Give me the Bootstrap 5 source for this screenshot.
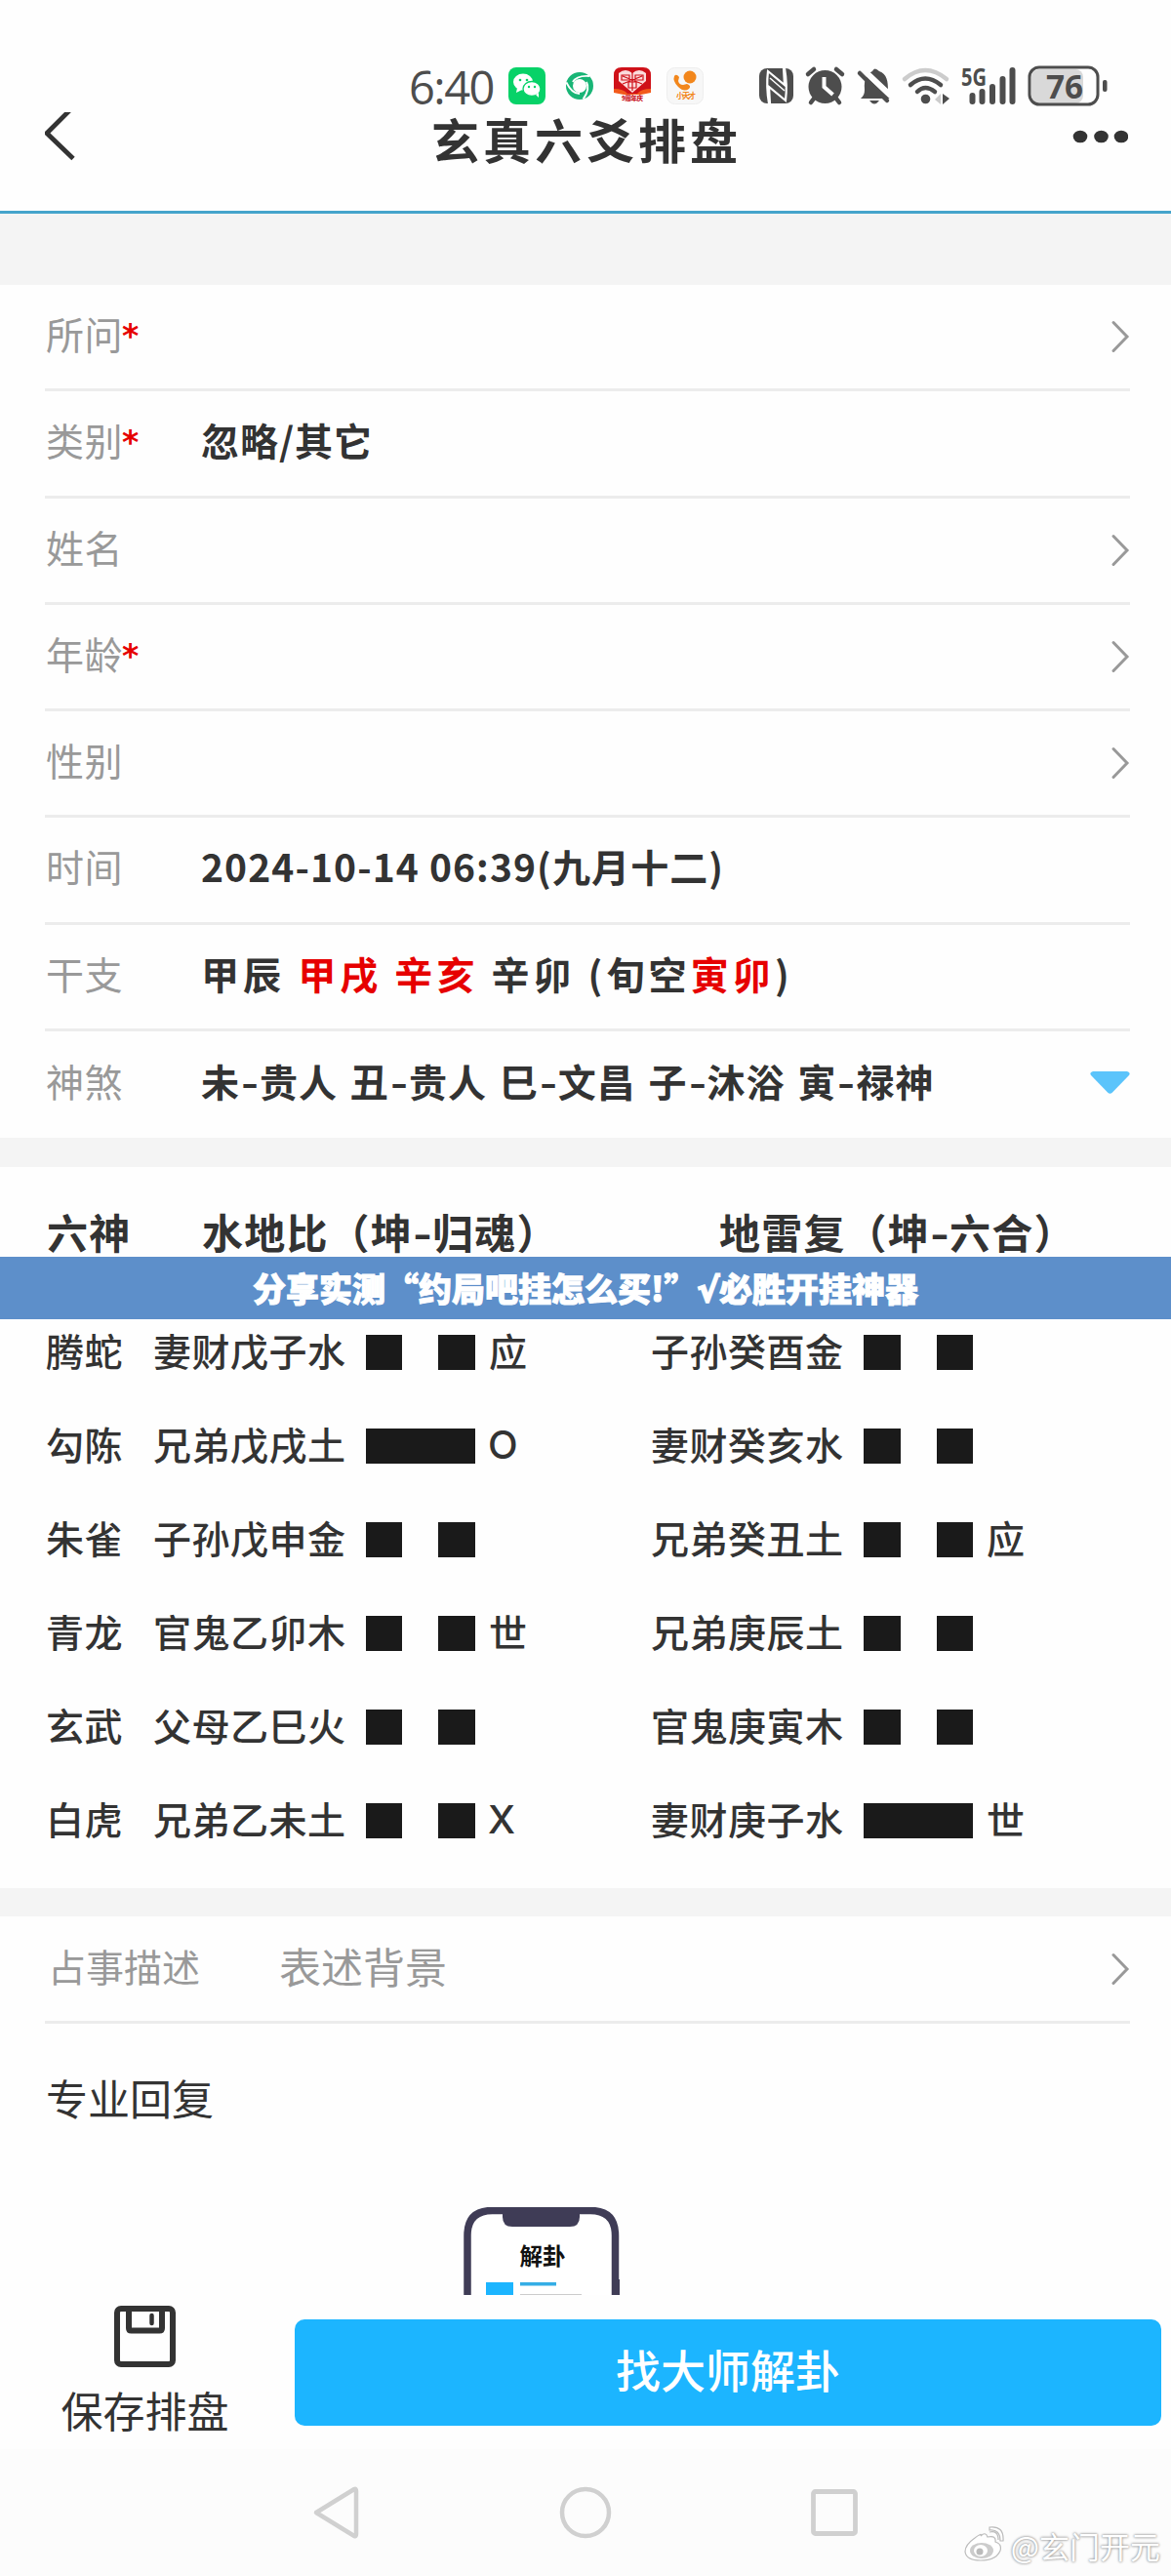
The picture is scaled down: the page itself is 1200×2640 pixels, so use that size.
<!DOCTYPE html>
<html lang="zh-CN">
<head>
<meta charset="utf-8">
<meta name="viewport" content="width=device-width, initial-scale=1">
<title>玄真六爻排盘</title>
<link href="https://cdn.jsdelivr.net/npm/bootstrap@5.3.0/dist/css/bootstrap.min.css" rel="stylesheet">
<style>
body{font-family:"Noto Sans CJK SC",sans-serif;color:#333;background:#fefefe;width:1200px;height:2640px;overflow:hidden;font-size:39px;line-height:1;position:relative}
svg{display:block;flex:none}
.top-area{height:219px;border-bottom:3px solid #45a4cb}
.status-wrap{height:118px}
.status-line{height:58px;margin-top:60px;padding-left:419px}
.clock-text{font-family:"Open Sans","Noto Sans",sans-serif;font-weight:500;font-size:47px;color:#4d4d4d;width:102px;letter-spacing:-1.5px;line-height:50px}
.title-line{height:60px;margin-top:-3px;padding:0 44px 0 46px}
.title-line h1{font-size:49px;letter-spacing:4px;font-weight:700;line-height:50px;margin:0 0 6px}
.gap-strip{background:#f4f4f4}
.strip-top{height:73px}
.strip-mid{height:30px}
.strip-low{height:29px}
.field-row{height:109.25px;margin:0 42px 0 46px;border-bottom:3px solid #ececec}
.field-row:last-child{border-bottom:0}
.field-label{width:161px;padding:0 0 7px 1px;color:#999;letter-spacing:.5px;white-space:nowrap}
.req-star{color:#e60000;font-weight:700;font-family:"DejaVu Sans",sans-serif;font-size:33px;line-height:1;vertical-align:2px;margin-left:-1px}
.field-value{font-weight:700;letter-spacing:1px;white-space:pre;padding-bottom:7px;margin-left:-1px}
.date-value{letter-spacing:1.1px}
.omen-value{word-spacing:3px}
.wide-gap{letter-spacing:4.1px}
.dash{display:inline-block;width:20px;text-align:center;letter-spacing:0;transform:scaleX(1.25)}
.hot{color:#e60000}
.chart-head{height:92px;padding-top:44px;font-size:42px;font-weight:700;letter-spacing:1.2px}
.chart-head span{line-height:44px;white-space:nowrap}
.head-god{width:207px;padding-left:48px}
.head-main{width:530px}
.ad-banner{height:64px;background:#5d8fca;color:#fff;font-weight:900;font-size:34px;line-height:64px;-webkit-text-stroke:1px #fff;white-space:nowrap}
.root-mark{font-family:"DejaVu Sans",sans-serif;font-weight:700;-webkit-text-stroke:2px #fff}
.yao-list{height:583px}
.yao-list>div{margin-top:-14px}
.yao-row{height:96px;padding-left:47px;font-weight:500;letter-spacing:.5px;white-space:nowrap}
.yao-god{width:110px;padding-bottom:6px}
.yao-name{width:218px;padding-bottom:6px}
.yao-side{width:510px}
.yao-bar{width:112px;height:36px;background:linear-gradient(90deg,#1a1a1a 37.5px,transparent 37.5px,transparent 74.5px,#1a1a1a 74.5px)}
.yao-bar.solid{background:#1a1a1a}
.yao-note{margin-left:14px;padding-bottom:6px}
.yao-latin{font-family:Inter,sans-serif;font-size:40px;padding-bottom:2px;margin-left:13px}
.desc-row{height:110px;margin:0 42px 0 46px;border-bottom:3px solid #ececec;color:#999}
.desc-row span{padding-bottom:7px}
.desc-label{width:240px;padding-left:3px}
.desc-hint{font-size:43px}
.reply-title{font-size:43px;height:188px;padding:53px 0 0 47px;line-height:44px}
.phone-art{margin-left:470px}
.bottom-bar{height:158px}
.save-box{width:302px;font-size:43px;padding:11px 5px 0 0}
.save-box span{margin-top:22px}
.btn-master{width:888px;height:109px;margin-top:25px;border-radius:10px;background:#1cb5ff;color:#fff;font-size:46px;font-weight:500;border:0;line-height:1;padding:0 0 9px}
.sys-nav{height:130px;background:#fcfcfc;padding:0 319px}
.wb-mark{position:absolute;right:11px;top:2586px;color:#fff;font-size:31px;text-shadow:0 0 3px #888,0 0 2px #aaa}
</style>
</head>
<body>
<header class="top-area">
  <div class="status-wrap d-flex align-items-center">
    <div class="status-line d-flex align-items-center w-100">
      <span class="clock-text">6:40</span>
      <svg width="640" height="58" viewBox="521 60 640 58">
        <rect x="521" y="69" width="38" height="38" rx="8" fill="#07d268"/>
        <ellipse cx="536" cy="84" rx="10" ry="8.500" fill="#fff"/><path d="M530 90l-1 5 6-3z" fill="#fff"/>
        <ellipse cx="545" cy="91" rx="9" ry="7.500" fill="#fff" stroke="#07d268" stroke-width="1.300"/><path d="M549 97l3 3 0-5z" fill="#fff"/>
        <g fill="#07d268"><circle cx="533" cy="82" r="1.300"/><circle cx="540" cy="82" r="1.300"/><circle cx="542" cy="89" r="1.200"/><circle cx="548" cy="89" r="1.200"/></g>
        <circle cx="594" cy="88" r="10.500" fill="none" stroke="#18b576" stroke-width="7"/>
        <g fill="none" stroke="#fff" stroke-width="2"><path d="M587 84q4-7 17-6"/><path d="M587 84q4-7 17-6" transform="rotate(120 594 88)"/><path d="M587 84q4-7 17-6" transform="rotate(240 594 88)"/></g>
        <path d="M629 94V77q0-8 8-8h22q8 0 8 8v17l-12 2h-14z" fill="#cf1119"/><path d="M629 91q10 0 14 5h10q4-5 14-5v4l-10 2h-18l-10-2z" fill="#f25a1c"/>
        <path d="M648 95L634 83v-8q7-6 14 0q7-6 14 0v8z" fill="#fbdcdc"/>
        <path d="M637 77h8v5h-8zM651 77h8v5h-8zM644 84h8v6h-8zM648 74v19M638 86l20-8M658 86l-20-8" fill="none" stroke="#cf1119" stroke-width="1.200"/>
        <text x="648" y="103" font-size="6.500" font-weight="900" fill="#c8101a" text-anchor="middle" textLength="22">9周年庆</text>
        <rect x="683.500" y="69.500" width="37" height="37" rx="8" fill="#f7f7f7" stroke="#eee"/>
        <circle cx="707" cy="79" r="6.500" fill="#f2861b"/><path d="M691 78q2-3 5 1l-1 4q1 4 5 4l4-1q5 2 2 5q-5 4-11-2q-6-6-4-11z" fill="#f2861b"/>
        <text x="703" y="101" font-size="8" font-weight="700" fill="#f2861b" text-anchor="middle" textLength="20">小天才</text>
        <g fill="#4d4d4d">
          <rect x="778" y="70" width="35" height="36" rx="8"/>
          <path d="M788 106q-3-17-1-33l17 14-1-17M804 70q3 17 1 33l-17-14 1 17" stroke="#fefefe" stroke-width="2.200" fill="none"/><path d="M789 80l15 13" stroke="#fefefe" stroke-width="1.500"/>
          <circle cx="845.500" cy="89" r="17"/><path d="M828 76l6-5M863 76l-6-5M834 101l-3 4M857 101l3 4" stroke="#4d4d4d" stroke-width="4.500" stroke-linecap="round"/>
          <path d="M844.500 79v10l9 8" stroke="#fefefe" stroke-width="4" fill="none"/>
          <path d="M882 101q4-3 4-9c-1-12 3-17 8-19q2-5 7 0c8 3 9 10 9 20l3 8z"/><path d="M891 103h10q-5 7-10 0z"/>
          <path d="M884 71l32 30" stroke="#fefefe" stroke-width="6"/><path d="M881 75l28 28" stroke="#4d4d4d" stroke-width="4.500" stroke-linecap="round"/>
        </g>
        <path d="M927 81q21-18 43 0" fill="none" stroke="#ccc" stroke-width="4.500" stroke-linecap="round"/>
        <path d="M933 87q15-13 31 0M940 94q8-8 18 0" fill="none" stroke="#4d4d4d" stroke-width="4.500" stroke-linecap="round"/><circle cx="948.500" cy="101.500" r="4.800" fill="#4d4d4d"/>
        <path d="M964 96v11l-6-5z" fill="#ccc"/><path d="M966 96v11l7-6z" fill="#4d4d4d"/>
        <text x="985" y="87.500" font-family="Open Sans" font-size="25" font-weight="700" fill="#4d4d4d" textLength="26" lengthAdjust="spacingAndGlyphs">5G</text>
        <path d="M996.500 98v6M1006.500 94v10M1017 89v15M1027.500 81v23M1037.500 72v32" stroke="#4d4d4d" stroke-width="6" stroke-linecap="round"/>
        <rect x="1057" y="71" width="53" height="35" rx="8" fill="#d9d9d9"/><rect x="1055" y="69" width="70" height="38" rx="10" fill="none" stroke="#4d4d4d" stroke-width="3"/>
        <rect x="1130" y="82" width="4.500" height="12" rx="2" fill="#4d4d4d"/>
        <text x="1072" y="101" font-family="Open Sans" font-size="34" font-weight="700" fill="#4d4d4d" textLength="38" lengthAdjust="spacingAndGlyphs">76</text>
      </svg>
    </div>
  </div>
  <div class="title-line d-flex justify-content-between align-items-center">
    <svg width="64" height="60" viewBox="46 115 64 60"><path d="M75 109.500L48 136.500l27 26" fill="none" stroke="#333" stroke-width="4.800"/></svg>
    <h1>玄真六爻排盘</h1>
    <svg width="64" height="60" viewBox="1092 106 64 60"><g fill="#333"><ellipse cx="1107" cy="131" rx="7.300" ry="6.300"/><ellipse cx="1128.500" cy="131" rx="7.300" ry="6.300"/><ellipse cx="1149" cy="131" rx="7.300" ry="6.300"/></g></svg>
  </div>
</header>
<div class="gap-strip strip-top"></div>

<svg class="d-none"><symbol id="chev" viewBox="0 0 20 34"><path d="M3 2.500l14 14.500L3 31.500" fill="none" stroke="#999" stroke-width="3" stroke-linecap="round"/></symbol></svg>
<section>
  <div class="field-row d-flex align-items-center"><div class="field-label">所问<span class="req-star">*</span></div><svg class="ms-auto" width="20" height="34"><use href="#chev"/></svg></div>
  <div class="field-row d-flex align-items-center"><div class="field-label">类别<span class="req-star">*</span></div><div class="field-value">忽略/其它</div></div>
  <div class="field-row d-flex align-items-center"><div class="field-label">姓名</div><svg class="ms-auto" width="20" height="34"><use href="#chev"/></svg></div>
  <div class="field-row d-flex align-items-center"><div class="field-label">年龄<span class="req-star">*</span></div><svg class="ms-auto" width="20" height="34"><use href="#chev"/></svg></div>
  <div class="field-row d-flex align-items-center"><div class="field-label">性别</div><svg class="ms-auto" width="20" height="34"><use href="#chev"/></svg></div>
  <div class="field-row d-flex align-items-center"><div class="field-label">时间</div><div class="field-value date-value">2024-10-14 06:39(九月十二)</div></div>
  <div class="field-row d-flex align-items-center"><div class="field-label">干支</div><div class="field-value wide-gap">甲辰 <span class="hot">甲戌</span> <span class="hot">辛亥</span> 辛卯 (旬空<span class="hot">寅卯</span>)</div></div>
  <div class="field-row d-flex align-items-center"><div class="field-label">神煞</div><div class="field-value omen-value">未<span class="dash">-</span>贵人 丑<span class="dash">-</span>贵人 巳<span class="dash">-</span>文昌 子<span class="dash">-</span>沐浴 寅<span class="dash">-</span>禄神</div><svg class="ms-auto" width="41" height="26" viewBox="0 0 41 26"><path d="M3 0h35q4 1 2 4L23 21.500q-2.500 2.500-5 0L1 4q-2-3 2-4z" fill="#5bc4fb"/></svg></div>
</section>
<div class="gap-strip strip-mid"></div>

<section>
  <div class="chart-head d-flex"><span class="head-god">六神</span><span class="head-main">水地比（坤<span class="dash">-</span>归魂）</span><span>地雷复（坤<span class="dash">-</span>六合）</span></div>
  <div class="ad-banner text-center">分享实测“约局吧挂怎么买!”<span class="root-mark">√</span>必胜开挂神器</div>
  <div class="yao-list d-flex flex-column">
    <div>
    <div class="yao-row d-flex align-items-center"><div class="yao-god">腾蛇</div><div class="yao-side d-flex align-items-center"><div class="yao-name">妻财戊子水</div><div class="yao-bar"></div><div class="yao-note">应</div></div><div class="yao-name">子孙癸酉金</div><div class="yao-bar"></div></div>
    <div class="yao-row d-flex align-items-center"><div class="yao-god">勾陈</div><div class="yao-side d-flex align-items-center"><div class="yao-name">兄弟戊戌土</div><div class="yao-bar solid"></div><div class="yao-note yao-latin">O</div></div><div class="yao-name">妻财癸亥水</div><div class="yao-bar"></div></div>
    <div class="yao-row d-flex align-items-center"><div class="yao-god">朱雀</div><div class="yao-side d-flex align-items-center"><div class="yao-name">子孙戊申金</div><div class="yao-bar"></div></div><div class="yao-name">兄弟癸丑土</div><div class="yao-bar"></div><div class="yao-note">应</div></div>
    <div class="yao-row d-flex align-items-center"><div class="yao-god">青龙</div><div class="yao-side d-flex align-items-center"><div class="yao-name">官鬼乙卯木</div><div class="yao-bar"></div><div class="yao-note">世</div></div><div class="yao-name">兄弟庚辰土</div><div class="yao-bar"></div></div>
    <div class="yao-row d-flex align-items-center"><div class="yao-god">玄武</div><div class="yao-side d-flex align-items-center"><div class="yao-name">父母乙巳火</div><div class="yao-bar"></div></div><div class="yao-name">官鬼庚寅木</div><div class="yao-bar"></div></div>
    <div class="yao-row d-flex align-items-center"><div class="yao-god">白虎</div><div class="yao-side d-flex align-items-center"><div class="yao-name">兄弟乙未土</div><div class="yao-bar"></div><div class="yao-note yao-latin">X</div></div><div class="yao-name">妻财庚子水</div><div class="yao-bar solid"></div><div class="yao-note">世</div></div>
    </div>
  </div>
</section>
<div class="gap-strip strip-low"></div>

<section>
  <div class="desc-row d-flex align-items-center"><span class="desc-label">占事描述</span><span class="desc-hint">表述背景</span><svg class="ms-auto" width="20" height="34"><use href="#chev"/></svg></div>
  <div class="reply-title">专业回复</div>
  <svg class="phone-art" width="170" height="90" viewBox="470 2262 170 90">
    <path d="M479 2360V2291q0-25.500 25.500-25.500H605q25.500 0 25.500 25.500V2360" fill="#fff" stroke="#3f3c56" stroke-width="7.500"/>
    <path d="M515 2262h79v10q0 10-10 10h-59q-10 0-10-10z" fill="#3f3c56"/><rect x="631" y="2336" width="4" height="20" fill="#3f3c56"/>
    <text x="556" y="2320.500" font-size="23.500" font-weight="700" fill="#111" text-anchor="middle">解卦</text>
    <path d="M498 2339h28v13h-28z" fill="#1cb5ff"/><path d="M533 2339h37v3.500h-37z" fill="#35aee6"/><path d="M533 2351h63v2h-63z" fill="#ccc"/>
  </svg>
</section>

<footer>
  <div class="bottom-bar d-flex">
    <div class="save-box d-flex flex-column align-items-center">
      <svg width="63" height="63" viewBox="0 0 63 63"><rect x="3" y="3" width="57" height="57" rx="4" fill="none" stroke="#333" stroke-width="6"/><path d="M15 3v20q0 2.500 2.500 2.500h29q2.500 0 2.500-2.500V3" fill="none" stroke="#333" stroke-width="6"/><path d="M38.500 10v8" stroke="#333" stroke-width="4.500" stroke-linecap="round"/></svg>
      <span>保存排盘</span>
    </div>
    <button class="btn btn-master">找大师解卦</button>
  </div>
  <nav class="sys-nav d-flex justify-content-between align-items-center">
    <svg width="52" height="58" viewBox="0 0 52 58"><path d="M5 29L44 5q2-1 2 2v44q0 3-2 2z" fill="none" stroke="#d0d0d0" stroke-width="4.500" stroke-linejoin="round"/></svg>
    <svg width="56" height="56" viewBox="0 0 56 56"><circle cx="28" cy="28" r="24" fill="none" stroke="#d0d0d0" stroke-width="4.500"/></svg>
    <svg width="52" height="52" viewBox="0 0 52 52"><rect x="4.500" y="4.500" width="43" height="43" rx="2" fill="none" stroke="#d0d0d0" stroke-width="4.800"/></svg>
  </nav>
</footer>
<div class="wb-mark d-flex align-items-center gap-1">
  <svg width="46" height="44" viewBox="0 0 46 44"><g fill="#fff" stroke="#bbb" stroke-width="1.200"><path d="M19 13q5-5 7 1q9-2 8 5q7 2 5 9q-4 10-20 10Q4 38 3 29q0-7 10-14q8-6 6-2z"/><path d="M28 9q9-2 9 8M28 4q15-2 14 14l-3 0q0-12-11-11z"/></g><ellipse cx="20" cy="28" rx="12" ry="8" fill="#ccc"/><ellipse cx="19" cy="28" rx="7" ry="6" fill="#fff"/><circle cx="18" cy="29" r="3.500" fill="#bbb"/></svg>
  <span>@玄门开元</span>
</div>
<script src="https://cdn.jsdelivr.net/npm/bootstrap@5.3.0/dist/js/bootstrap.bundle.min.js"></script>
</body>
</html>
